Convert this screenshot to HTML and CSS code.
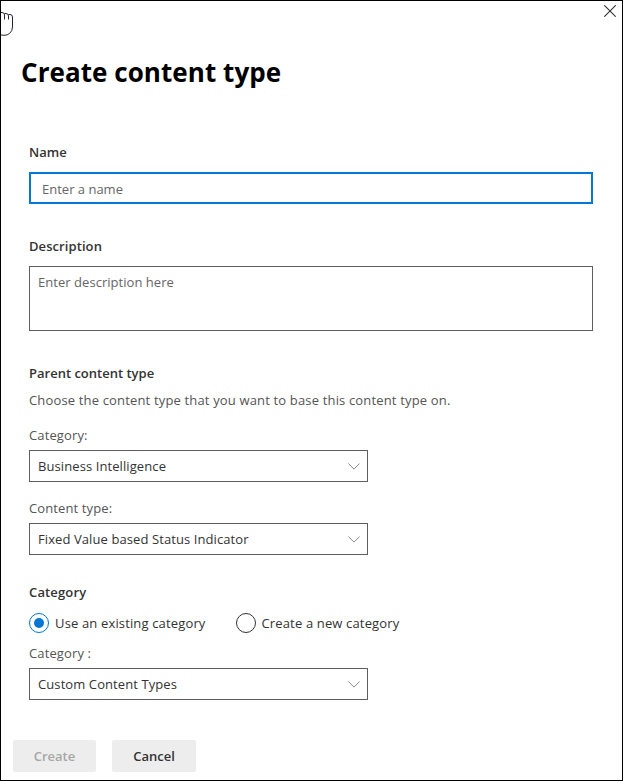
FILE: index.html
```html
<!DOCTYPE html>
<html lang="en">
<head>
<meta charset="utf-8">
<title>Create content type</title>
<link rel="stylesheet" href="styles.css">
</head>
<body>
<main class="panel">
  <svg class="pointer" width="14" height="37" viewBox="0 0 14 37" fill="none">
    <path d="M0 12V35H4Q12.500 34 12.500 26V14L4 12Z" fill="#fff"/>
    <path d="M0 5V12" stroke="#99a"/>
    <path d="M0 12.500H2Q4.500 12.500 4.500 15V19.500M4.500 13.500H6Q8.500 13.500 8.500 16V19.500M8.500 14.500H10Q12.500 14.500 12.500 17V27Q12.500 31 9.500 33.500Q7.500 35.300 4 35.300Q1.500 35.300 0 34.300" stroke="#252535"/>
  </svg>
  <svg class="close" width="12" height="12" viewBox="0 0 12 12"><path d="M.3.3 11.700 11.700M11.700.3.3 11.700" stroke="#333" stroke-width="1.100"/></svg>
  <h1 class="title">Create content type</h1>
  <form class="form">
    <div class="label name-label">Name</div>
    <div class="input">Enter a name</div>
    <div class="label desc-label">Description</div>
    <div class="textarea">Enter description here</div>
    <div class="label parent-label">Parent content type</div>
    <div class="hint">Choose the content type that you want to base this content type on.</div>
    <div class="sub first-sub">Category:</div>
    <div class="select"><span>Business Intelligence</span><svg class="chev" width="12" height="7" viewBox="0 0 12 7"><path d="M.4.5 6 6.100 11.600.5"/></svg></div>
    <div class="sub second-sub">Content type:</div>
    <div class="select"><span>Fixed Value based Status Indicator</span><svg class="chev" width="12" height="7" viewBox="0 0 12 7"><path d="M.4.5 6 6.100 11.600.5"/></svg></div>
    <div class="label cat-label">Category</div>
    <div class="radios">
      <div class="radio existing"><i class="dot on"></i><span>Use an existing category</span></div>
      <div class="radio new"><i class="dot"></i><span>Create a new category</span></div>
    </div>
    <div class="sub third-sub">Category :</div>
    <div class="select"><span>Custom Content Types</span><svg class="chev" width="12" height="7" viewBox="0 0 12 7"><path d="M.4.5 6 6.100 11.600.5"/></svg></div>
  </form>
  <footer class="actions">
    <div class="btn disabled">Create</div>
    <div class="btn cancel">Cancel</div>
  </footer>
</main>
</body>
</html>
```

FILE: styles.css
```css
* { box-sizing: border-box; }
body { margin: 0; }
.panel {
  position: relative;
  width: 623px;
  height: 781px;
  border: 1px solid #000;
  background: #fff;
  color: #333;
  font: 13px/20px "Open Sans", "Noto Sans", sans-serif;
  overflow: hidden;
  padding-top: 53px;
  white-space: nowrap;
}
.pointer { position: absolute; left: -1px; top: -1px; }
.close { position: absolute; left: 603px; top: 4px; }
.title { margin: 0 0 0 20px; font-size: 26px; line-height: 36px; font-weight: 700; letter-spacing: .06px; color: #000; }
.form { padding-left: 28px; width: 592px; }
.label { font-weight: 600; color: #333; }
.name-label { margin: 52px 0 10px; }
.input { height: 32px; border: 2px solid #0078d4; padding: 5px 11px; color: #666; }
.desc-label { margin: 32px 0 10px; letter-spacing: .08px; }
.textarea { height: 65px; border: 1px solid #605e5c; padding: 5px 8px; color: #666; letter-spacing: .04px; }
.parent-label { margin: 32px 0 7px; }
.hint, .sub { color: #555; }
.hint { letter-spacing: .16px; }
.sub { letter-spacing: .12px; }
.first-sub { margin: 15px 0 5px; }
.second-sub { margin: 16px 0 5px; }
.third-sub { margin: 10px 0 5px; }
.select {
  display: flex;
  align-items: center;
  justify-content: space-between;
  width: 339px;
  height: 32px;
  border: 1px solid #605e5c;
  padding: 0 7px 0 8px;
  letter-spacing: .09px;
}
.chev { fill: none; stroke: #888; stroke-width: 1; }
.cat-label { margin: 27px 0 11px; letter-spacing: .15px; }
.radios { display: flex; }
.radio { display: flex; align-items: center; gap: 6px; height: 20px; letter-spacing: .15px; }
.existing { width: 207px; }
.new { gap: 5.500px; }
.dot {
  display: flex;
  align-items: center;
  justify-content: center;
  flex: none;
  width: 20px;
  height: 20px;
  border: 1px solid #333;
  border-radius: 50%;
}
.on { border-color: #0078d4; }
.on::after { content: ""; width: 10px; height: 10px; border-radius: 50%; background: #0078d4; }
.actions { display: flex; gap: 16px; margin: 40px 0 0 12px; }
.btn {
  width: 83px;
  height: 32px;
  border-radius: 2px;
  background: #ededed;
  line-height: 32px;
  text-align: center;
  font-weight: 600;
}
.cancel { width: 84px; }
.disabled { color: #a6a6a6; }
```
